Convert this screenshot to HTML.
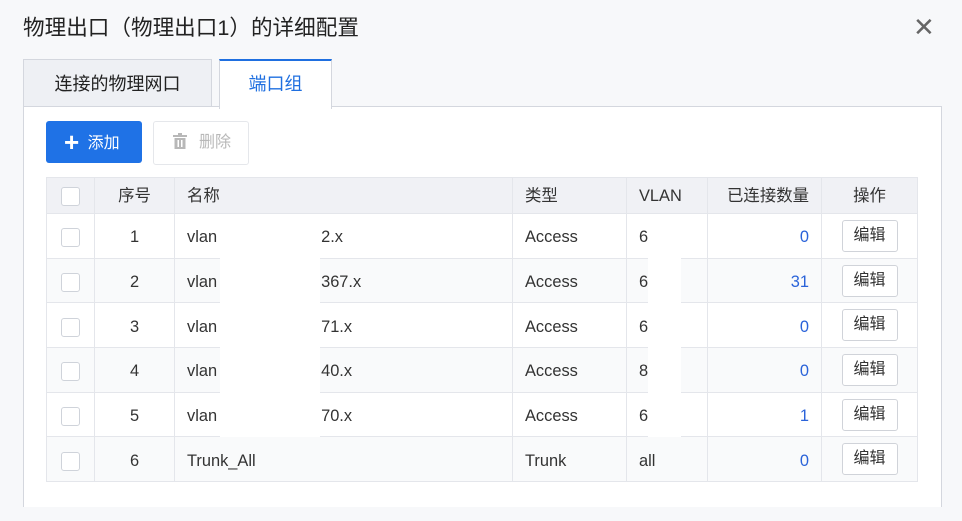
<!DOCTYPE html><html><head><meta charset="utf-8"><style>
body{margin:0;width:962px;height:521px;background:#f7f8fa;font-family:"Liberation Sans","Noto Sans CJK SC",sans-serif;color:#333;position:relative;overflow:hidden}
.a{position:absolute}
.title{left:23px;top:11px;font-size:21.6px;color:#222}
.close{left:913px;top:12px;font-size:26px;color:#666}
.tab1{left:23px;top:59px;width:187px;height:47px;background:#eef0f4;border:1px solid #d4d7de;border-bottom:none;font-size:18px;text-align:center;line-height:48px;color:#222}
.tab2{left:219px;top:59px;width:111px;height:48px;background:#fff;border:1px solid #d4d7de;border-top:2px solid #1f6fe0;border-bottom:none;font-size:18px;text-align:center;line-height:46px;color:#1f6fe0;z-index:2}
.panel{left:23px;top:106px;width:917px;height:400px;background:#fff;border:1px solid #d4d7de;border-bottom:none}
.add{left:46px;top:121px;width:96px;height:42px;background:#1f72e6;border-radius:3px;color:#fff;font-size:16px;line-height:42px}
.del{left:153px;top:121px;width:94px;height:42px;border:1px solid #e5e7eb;border-radius:3px;color:#b8b8b8;font-size:16px;line-height:42px;background:#fff}
table{position:absolute;left:46px;top:177px;border-collapse:collapse;font-size:16.4px;table-layout:fixed;width:871px}
td{border:1px solid #e4e6eb;height:44.7px;padding:0 12px;color:#333;vertical-align:middle;box-sizing:border-box;line-height:20px;padding-top:3px}
tr.h td{background:#f0f1f5;height:36px;padding-top:0}
tr:nth-child(odd):not(.h) td{background:#f9fafb}
.cb{display:inline-block;width:17px;height:17px;border:1px solid #cfd3da;border-radius:3px;background:#fff;vertical-align:middle}
.n{color:#2b63d9;text-align:right}
.btn{display:inline-block;width:54px;height:30px;border:1px solid #d0d3d9;border-radius:3px;text-align:center;line-height:30px;background:#fff;font-size:16px}
.w{background:#fff;z-index:3}
</style></head><body>
<div class="a title">物理出口（物理出口1）的详细配置</div>
<div class="a close">✕</div>
<div class="a tab1">连接的物理网口</div>
<div class="a tab2">端口组</div>
<div class="a panel"></div>
<div class="a add"><span style="font-size:26px;font-weight:bold;margin-left:18px;vertical-align:-3px">+</span> <span style="margin-left:4px">添加</span></div>
<div class="a del"><svg width="14" height="16" style="margin-left:19px;vertical-align:-2px" viewBox="0 0 14 16"><rect x="0" y="2" width="14" height="2" fill="#b8b8b8"/><rect x="5" y="0" width="4" height="2" fill="#b8b8b8"/><rect x="1.5" y="5" width="11" height="11" fill="#b8b8b8"/><rect x="4.5" y="7" width="1.5" height="7" fill="#fff"/><rect x="8" y="7" width="1.5" height="7" fill="#fff"/></svg><span style="margin-left:12px">删除</span></div>
<table>
<colgroup><col style="width:48px"><col style="width:80px"><col style="width:338px"><col style="width:114px"><col style="width:81px"><col style="width:114px"><col style="width:96px"></colgroup>
<tr class="h"><td style="text-align:center"><span class="cb"></span></td><td style="text-align:center">序号</td><td>名称</td><td>类型</td><td>VLAN</td><td style="text-align:right">已连接数量</td><td style="text-align:center">操作</td></tr>
<tr><td style="text-align:center"><span class="cb"></span></td><td style="text-align:center">1</td><td>vlan<span style="margin-left:104px">2.x</span></td><td>Access</td><td>6</td><td class="n">0</td><td style="text-align:center;padding:0"><span class="btn">编辑</span></td></tr>
<tr><td style="text-align:center"><span class="cb"></span></td><td style="text-align:center">2</td><td>vlan<span style="margin-left:104px">367.x</span></td><td>Access</td><td>6</td><td class="n">31</td><td style="text-align:center;padding:0"><span class="btn">编辑</span></td></tr>
<tr><td style="text-align:center"><span class="cb"></span></td><td style="text-align:center">3</td><td>vlan<span style="margin-left:104px">71.x</span></td><td>Access</td><td>6</td><td class="n">0</td><td style="text-align:center;padding:0"><span class="btn">编辑</span></td></tr>
<tr><td style="text-align:center"><span class="cb"></span></td><td style="text-align:center">4</td><td>vlan<span style="margin-left:104px">40.x</span></td><td>Access</td><td>8</td><td class="n">0</td><td style="text-align:center;padding:0"><span class="btn">编辑</span></td></tr>
<tr><td style="text-align:center"><span class="cb"></span></td><td style="text-align:center">5</td><td>vlan<span style="margin-left:104px">70.x</span></td><td>Access</td><td>6</td><td class="n">1</td><td style="text-align:center;padding:0"><span class="btn">编辑</span></td></tr>
<tr><td style="text-align:center"><span class="cb"></span></td><td style="text-align:center">6</td><td>Trunk_All</td><td>Trunk</td><td>all</td><td class="n">0</td><td style="text-align:center;padding:0"><span class="btn">编辑</span></td></tr>
</table>
<div class="a w" style="left:220px;top:258px;width:100px;height:179px"></div>
<div class="a w" style="left:648px;top:258px;width:33px;height:179px"></div>
</body></html>
